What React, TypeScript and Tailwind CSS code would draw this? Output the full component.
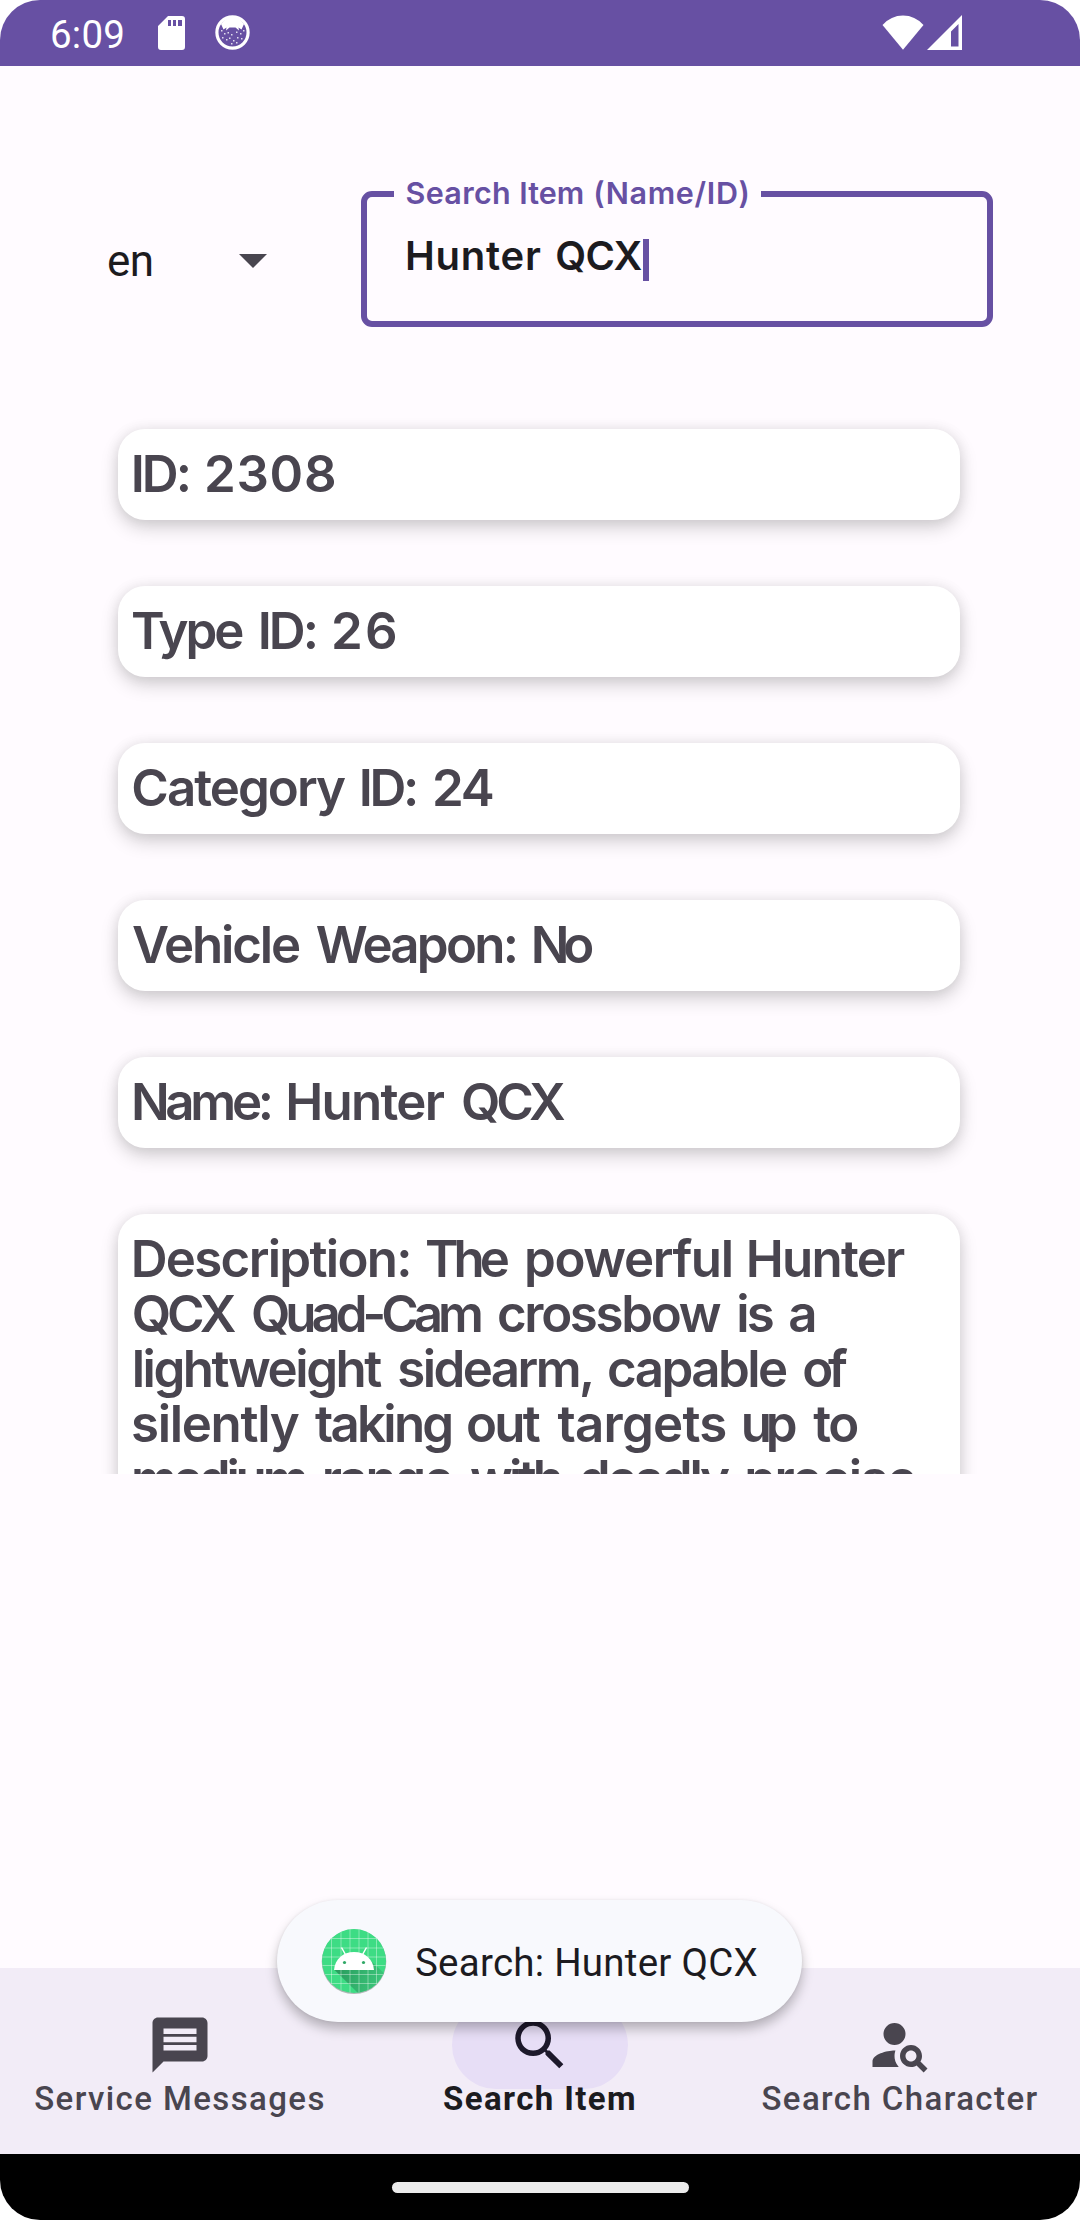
import React from "react";

// [text, letter spacing in px, left margin in px]
type Word = [string, number, number];

const cards: Word[][][] = [
  [[["ID:", -2.98, 1.7], ["2308", 0.71, 15]]],
  [[["Type", -3, 2], ["ID:", -2.98, 16.2], ["26", 2.22, 15]]],
  [[["Category", -1.97, 2.3], ["ID:", -3.33, 14.7], ["24", -2.28, 16.1]]],
  [[["Vehicle", -2.16, 3], ["Weapon:", -2.75, 16.7], ["No", -6.12, 14.5]]],
  [[["Name:", -4.35, 2], ["Hunter", -1.74, 15.7], ["QCX", -4.2, 17.8]]],
  [
    [["Description:", -1.69, 1.7], ["The", -5.1, 14.1], ["powerful", -1.4, 19.2], ["Hunter", -1.76, 13.1]],
    [["QCX", -4.2, 2.7], ["Quad-Cam", -5.05, 18.8], ["crossbow", -2.33, 18.1], ["is", -2.95, 17.1], ["a", 0, 16.5]],
    [["lightweight", -2.48, 2.7], ["sidearm,", -2.58, 17.5], ["capable", -2.55, 14.3], ["of", -5.35, 16.7]],
    [["silently", -1.32, 2], ["taking", -2.76, 16.6], ["out", -2.79, 14.6], ["targets", -0.72, 19.4], ["up", -6.23, 14.1], ["to", -2.51, 22]],
    [["medium", -4.16, 2], ["range", -2.54, 17.2], ["with", -3.85, 18.7], ["deadly", -3.21, 18.6], ["precise", -1.58, 17.5]],
  ],
];

function Words({ words }: { words: Word[] }) {
  return (
    <div className="flex whitespace-nowrap">
      {words.map(([text, tracking, gap], i) => (
        <span key={i} className="shrink-0" style={{ letterSpacing: tracking, marginLeft: gap }}>
          {text}
        </span>
      ))}
    </div>
  );
}

function StatusBar() {
  return (
    <header className="flex h-[66px] shrink-0 items-center bg-[#6750a3] text-white">
      <span className="ml-[50px] w-[108px] pt-[3px] text-[38.5px] leading-[60px] tracking-[0.23px]">6:09</span>
      <svg className="h-[34px] w-[27px]" viewBox="0 0 27 34">
        <path fill="#fff" fillRule="evenodd" d="M10 0H24a3 3 0 0 1 3 3V31a3 3 0 0 1-3 3H3a3 3 0 0 1-3-3V10zM10 4v6h3V4zM15 4v6h3V4zM20 4v6h4V4z" />
      </svg>
      <svg className="ml-[30px] h-[36px] w-[36px]" viewBox="0 0 36 36">
        <circle cx="17.5" cy="17.5" r="15.6" fill="none" stroke="#fff" strokeWidth="3.2" />
        <path fill="#fff" d="M6 9Q17.500-5 29 9L26.500 14.500 23.500 12.500 24 15.500 20.500 12.500H14.500L11 15.500 11.500 12.500 8.500 14.500z" />
        <g fill="#fff" opacity=".8">
          <path d="M6 15h1.500v1.500H6zM9 18h1.500v1.500H9zM12.500 17h1.500v1.500h-1.500zM16 19h1.500v1.500H16zM21 16.500h1.500v1.500H21zM25 18h1.500v1.500H25zM28 15h1.500v1.500H28zM7 22h1.500v1.500H7zM11 24h1.500v1.500H11zM14 22.500h1.500v1.500H14zM18 25h1.500v1.500H18zM22 22h1.500v1.500H22zM26 23h1.500v1.500H26zM16 28h1.500v1.500H16zM21 27h1.500v1.500H21z" />
        </g>
      </svg>
      <svg className="ml-auto h-[36px] w-[42px]" viewBox="0 0 42 36">
        <path fill="#fff" d="M0.500 10Q9 0.500 21 0.500T41.500 10L21 34.800z" />
      </svg>
      <svg className="mr-[118px] ml-[3px] h-[36px] w-[35px]" viewBox="0 0 35 36">
        <path fill="#fff" fillRule="evenodd" d="M35 0V35H0zM31.500 9L24 16.500V31.500H31.500z" />
      </svg>
    </header>
  );
}

function SearchForm() {
  return (
    <section className="flex pt-[125px]">
      <div className="flex w-[361px] items-center pt-1 text-[#1c1b1f]">
        <span className="ml-[107px] w-[132px] text-[44px] leading-[52px] tracking-[-0.63px]">en</span>
        <svg className="h-[14px] w-[28px]" viewBox="0 0 28 14">
          <path fill="#49454f" d="M0 0H28L14 14z" />
        </svg>
      </div>
      <div className="relative h-[136px] w-[632px] rounded-[11px] border-[6px] border-[#6750a3] font-[Inter] font-semibold">
        <label className="absolute -top-[26px] left-[27px] h-[44px] w-[367px] bg-[#fffbff] text-[30.5px] leading-[44px] text-[#6750a3]">
          <Words words={[["Search", 0.32, 11.5], ["Item", 0, 8.3], ["(Name/ID)", 0.68, 9.1]]} />
        </label>
        <div className="flex items-center pt-[34px] pl-[27px] text-[40px] leading-[48px] text-[#1c1b1f]">
          <Words words={[["Hunter", 0.77, 11], ["QCX", -0.86, 13.7]]} />
          <span className="mt-[8px] ml-px h-[42px] w-[6px] bg-[#6750a3]" />
        </div>
      </div>
    </section>
  );
}

function AndroidIcon() {
  return (
    <svg className="h-[80px] w-[80px] shrink-0" viewBox="0 0 80 80">
      <defs>
        <clipPath id="disc"><circle cx="40" cy="40" r="32" /></clipPath>
        <linearGradient id="cast" x1="25" y1="45" x2="70" y2="65" gradientUnits="userSpaceOnUse">
          <stop offset="0" stopColor="#2a9d5f" />
          <stop offset="1" stopColor="#3cc97c" />
        </linearGradient>
      </defs>
      <circle cx="40" cy="40.800" r="32.300" fill="#8f9a96" opacity=".7" />
      <g clipPath="url(#disc)">
        <rect width="80" height="80" fill="#3ddc84" />
        <path d="M20.500 49L46 74H74V56L57 40z" fill="url(#cast)" />
        <path d="M17.500 0V80M27 0V80M36 0V80M45 0V80M54 0V80M62.500 0V80M0 17.500H80M0 27H80M0 36H80M0 44.500H80M0 53.500H80M0 62.500H80" stroke="#fff" strokeOpacity=".42" strokeWidth=".9" />
      </g>
      <path d="M27.500 26.500L32 34.500M52.500 26.500L48 34.500" stroke="#fff" strokeWidth="1.500" />
      <path d="M20 49C21 38 29 31 40 31S59 38 60 49z" fill="#fff" />
      <circle cx="30.500" cy="41.500" r="1.600" fill="#2fa866" />
      <circle cx="49.500" cy="41.500" r="1.600" fill="#2fa866" />
    </svg>
  );
}

function Toast() {
  return (
    <div className="absolute top-[1900px] left-[277px] flex h-[122px] w-[525px] items-center rounded-full bg-[#f8f9fd] shadow-[0_7px_12px_rgba(0,0,0,0.26),0_0_3px_rgba(0,0,0,0.07)]">
      <div className="ml-[37px] flex items-center">
        <AndroidIcon />
        <span className="ml-[21px] pt-[4px] text-[38.5px] leading-[46px] tracking-[0.25px] whitespace-nowrap text-[#1c1b1f]">
          Search: Hunter QCX
        </span>
      </div>
    </div>
  );
}

const icons = {
  message: "M20 2H4c-1.100 0-2 .9-2 2v18l4-4h14c1.100 0 2-.9 2-2V4c0-1.100-.9-2-2-2zm-2 12H6v-2h12v2zm0-3H6V9h12v2zm0-3H6V6h12v2z",
  search: "M15.500 14h-.79l-.28-.27C15.410 12.590 16 11.110 16 9.500 16 5.910 13.090 3 9.500 3S3 5.910 3 9.500 5.910 16 9.500 16c1.610 0 3.090-.59 4.230-1.570l.27.28v.79l5 4.990L20.490 19l-4.990-5zm-6 0C7.010 14 5 11.990 5 9.500S7.010 5 9.500 5 14 7.010 14 9.500 11.990 14 9.500 14z",
  person: "M10 4a4 4 0 1 0 0 8 4 4 0 1 0 0-8zM10.350 14.010C7.620 13.910 2 15.270 2 18v2h9.540c-2.470-2.760-1.230-5.890-1.190-5.990zM19.430 18.020c.36-.59.57-1.280.57-2.020 0-2.210-1.790-4-4-4s-4 1.790-4 4 1.790 4 4 4c.74 0 1.430-.22 2.020-.57L20.590 22 22 20.590l-2.570-2.570zM16 18c-1.100 0-2-.9-2-2s.9-2 2-2 2 .9 2 2-.9 2-2 2z",
};

function NavItem({ icon, label, active }: { icon: string; label: string; active?: boolean }) {
  return (
    <div className={active ? "flex w-[360px] flex-col items-center pt-[33px] font-bold text-[#1c1b1f]" : "flex w-[360px] flex-col items-center pt-[33px] font-medium text-[#49454f]"}>
      <div className={active ? "flex h-[88px] w-[176px] items-center justify-center rounded-full bg-[#e7def6] text-[#1d192b]" : "flex h-[88px] w-[176px] items-center justify-center"}>
        <svg className="h-[66px] w-[66px]" viewBox="0 0 24 24" fill="currentColor">
          <path d={icon} />
        </svg>
      </div>
      <span className="-mt-[10px] text-[33px] leading-[39px] tracking-[1.4px] whitespace-nowrap">{label}</span>
    </div>
  );
}

export default function App() {
  return (
    <div className="w-[1080px] bg-white font-[Roboto,sans-serif]">
      <div className="relative flex h-[2220px] w-[1080px] flex-col overflow-hidden rounded-[40px] bg-[#fffbff]">
        <StatusBar />
        <SearchForm />
        <main className="mt-[60px] flex h-[1087px] shrink-0 flex-col gap-[66px] overflow-hidden px-[118px] pt-[42px] pr-[120px]">
          {cards.map((lines, i) => (
            <article
              key={i}
              className="shrink-0 rounded-[27px] bg-white px-[11px] pt-[17px] pb-[19px] font-[Inter] text-[51px] leading-[55px] font-semibold text-[#49454f] shadow-[0_8px_18px_rgba(0,0,0,0.17),0_0_14px_rgba(0,0,0,0.08)]"
            >
              {lines.map((words, j) => (
                <Words key={j} words={words} />
              ))}
            </article>
          ))}
        </main>
        <nav className="mt-auto flex h-[186px] shrink-0 bg-[#f2ecf7]">
          <NavItem icon={icons.message} label="Service Messages" />
          <NavItem icon={icons.search} label="Search Item" active />
          <NavItem icon={icons.person} label="Search Character" />
        </nav>
        <footer className="flex h-[66px] shrink-0 items-center justify-center bg-black">
          <div className="h-[11px] w-[297px] rounded-full bg-[#ebebeb]" />
        </footer>
        <Toast />
      </div>
    </div>
  );
}
